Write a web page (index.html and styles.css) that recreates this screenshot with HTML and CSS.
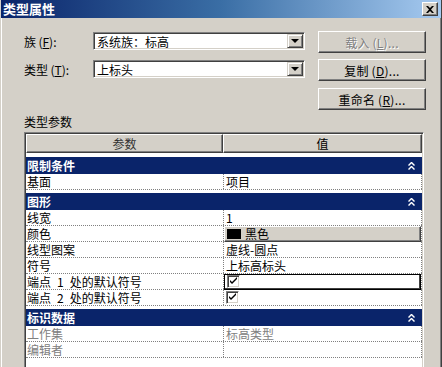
FILE: index.html
```html
<!DOCTYPE html>
<html lang="zh">
<head>
<meta charset="utf-8">
<link rel="stylesheet" href="styles.css">
</head>
<body>
<div class="window">
  <div class="titlebar">
    <span class="title">类型属性</span>
    <span class="close"><svg width="8" height="7" viewBox="0 0 8 7"><path d="M0 0h2l2 2 2-2h2L5 3.5 8 7H6L4 5 2 7H0l3-3.5z" fill="#000"/></svg></span>
  </div>
  <div class="body">
    <div class="top">
      <div class="lbl">族&thinsp;(<u>F</u>):</div>
      <div class="combo"><span class="combo-text">系统族：标高</span><span class="drop"><i></i></span></div>
      <div class="btn disabled">载入&thinsp;(<u>L</u>)...</div>
      <div class="lbl">类型&thinsp;(<u>T</u>):</div>
      <div class="combo"><span class="combo-text">上标头</span><span class="drop"><i></i></span></div>
      <div class="btn">复制&thinsp;(<u>D</u>)...</div>
      <div class="btn third">重命名&thinsp;(<u>R</u>)...</div>
    </div>
    <div class="group-label">类型参数</div>
    <div class="table">
      <div class="thead">
        <div class="th th-name">参数</div>
        <div class="th th-val">值</div>
      </div>
      <div class="gap4"></div>

      <div class="section">
        <div class="sec-head"><span>限制条件</span><svg class="chev" width="7" height="8" viewBox="0 0 7 8"><path d="M0 3 3 0h1l3 3-1 1-2.5-2.5L1 4zM0 7l3-3h1l3 3-1 1-2.5-2.5L1 8z" fill="#fff"/></svg></div>
        <div class="row"><div class="c-name">基面</div><div class="c-val">项目</div></div>
      </div>

      <div class="section">
        <div class="sec-head"><span>图形</span><svg class="chev" width="7" height="8" viewBox="0 0 7 8"><path d="M0 3 3 0h1l3 3-1 1-2.5-2.5L1 4zM0 7l3-3h1l3 3-1 1-2.5-2.5L1 8z" fill="#fff"/></svg></div>
        <div class="row"><div class="c-name">线宽</div><div class="c-val">1</div></div>
        <div class="row"><div class="c-name">颜色</div><div class="c-val"><div class="colorbtn"><span class="swatch"></span>黑色</div></div></div>
        <div class="row"><div class="c-name">线型图案</div><div class="c-val">虚线-圆点</div></div>
        <div class="row"><div class="c-name">符号</div><div class="c-val">上标高标头</div></div>
        <div class="row"><div class="c-name">端点&ensp;1&ensp;处的默认符号</div><div class="c-val"><div class="focusbox"><span class="check"><svg width="9" height="9" viewBox="0 0 9 9"><path d="M1 3v2l2 2 5-5V0L3 5z" fill="#000"/></svg></span></div></div></div>
        <div class="row"><div class="c-name">端点&ensp;2&ensp;处的默认符号</div><div class="c-val"><span class="check"><svg width="9" height="9" viewBox="0 0 9 9"><path d="M1 3v2l2 2 5-5V0L3 5z" fill="#000"/></svg></span></div></div>
      </div>

      <div class="section">
        <div class="sec-head"><span>标识数据</span><svg class="chev" width="7" height="8" viewBox="0 0 7 8"><path d="M0 3 3 0h1l3 3-1 1-2.5-2.5L1 4zM0 7l3-3h1l3 3-1 1-2.5-2.5L1 8z" fill="#fff"/></svg></div>
        <div class="row grey"><div class="c-name">工作集</div><div class="c-val">标高类型</div></div>
        <div class="row grey"><div class="c-name">编辑者</div><div class="c-val"></div></div>
      </div>
    </div>
  </div>
</div>
</body>
</html>
```

FILE: styles.css
```css
html, body {
  margin: 0;
  width: 442px;
  height: 367px;
  overflow: hidden;
  background: #d4d0c8;
  font-family: "Noto Sans CJK SC", "DejaVu Sans", sans-serif;
  font-size: 12px;
  color: #000;
}

.window {
  height: 367px;
  box-sizing: border-box;
  border-left: 1px solid #d4d0c8;
  border-right: 1px solid #404040;
  box-shadow: inset 1px 0 #fff, inset -1px 0 #808080;
  display: flex;
  flex-direction: column;
  overflow: hidden;
}

.titlebar {
  height: 18px;
  flex: none;
  display: flex;
  align-items: center;
  justify-content: space-between;
  padding: 0 3px 0 2px;
  background: linear-gradient(to right, #0a246a 0%, #3a6ea5 50%, #a6caf0 100%);
}

.title {
  color: #fff;
  font-weight: bold;
  font-size: 13px;
  line-height: 18px;
}

.close {
  width: 16px;
  height: 14px;
  box-sizing: border-box;
  background: #d4d0c8;
  border: 1px solid;
  border-color: #fff #404040 #404040 #fff;
  box-shadow: inset -1px -1px #808080;
  display: flex;
  align-items: center;
  justify-content: center;
}

.body {
  padding: 13px 0 0 23px;
  flex: 1;
  display: flex;
  flex-direction: column;
}

.top {
  display: grid;
  grid-template-columns: 69px 212px 121px;
  grid-template-rows: 22px 22px 22px;
  row-gap: 6px;
}

.lbl {
  align-self: center;
  line-height: 16px;
  white-space: nowrap;
}

.combo {
  height: 18px;
  margin-top: 1px;
  box-sizing: border-box;
  background: #fff;
  border: 1px solid;
  border-color: #808080 #fff #fff #808080;
  box-shadow: inset 1px 1px #404040, inset -1px -1px #d4d0c8;
  display: flex;
  align-items: center;
  justify-content: space-between;
  padding: 1px 1px 1px 3px;
}

.combo-text {
  line-height: 15px;
  white-space: nowrap;
}

.drop {
  width: 16px;
  height: 14px;
  box-sizing: border-box;
  background: #d4d0c8;
  border: 1px solid;
  border-color: #d4d0c8 #404040 #404040 #d4d0c8;
  box-shadow: inset 1px 1px #fff, inset -1px -1px #808080;
  display: flex;
  align-items: center;
  justify-content: center;
}

.drop i {
  display: block;
  width: 0;
  height: 0;
  border-left: 4px solid transparent;
  border-right: 4px solid transparent;
  border-top: 4px solid #000;
}

.btn {
  grid-column: 3;
  margin-left: 13px;
  box-sizing: border-box;
  height: 22px;
  background: #d4d0c8;
  border: 1px solid;
  border-color: #fff #404040 #404040 #fff;
  box-shadow: inset -1px -1px #808080, inset 1px 1px #d4d0c8;
  display: flex;
  align-items: center;
  justify-content: center;
  white-space: nowrap;
  letter-spacing: 0.3px;
}

.btn.disabled {
  color: #808080;
  text-shadow: 1px 1px 0 #fff;
}

.btn.third {
  margin-top: 1px;
}

.group-label {
  margin-top: 5px;
  line-height: 16px;
  height: 16px;
}

.table {
  margin-top: 2px;
  width: 400px;
  height: 260px;
  flex: none;
  box-sizing: border-box;
  background: #fff;
  border: 1px solid;
  border-color: #808080 #fff #fff #808080;
  box-shadow: inset 1px 1px #404040, inset -1px -1px #d4d0c8;
  padding: 1px;
}

.thead {
  display: flex;
  height: 19px;
}

.th {
  box-sizing: border-box;
  height: 19px;
  background: #d4d0c8;
  border: 1px solid;
  border-color: #fff #404040 #404040 #fff;
  box-shadow: inset -1px -1px #808080;
  display: flex;
  align-items: center;
  justify-content: center;
  line-height: 16px;
}

.th-name {
  width: 197px;
  color: #333;
}

.th-val {
  flex: 1;
}

.gap4 {
  height: 4px;
}

.section {
  margin-bottom: 3px;
}

.sec-head {
  height: 17px;
  background: #0a246a;
  color: #fff;
  font-weight: bold;
  display: flex;
  align-items: center;
  justify-content: space-between;
  padding: 0 7px 0 1px;
  line-height: 16px;
}

.chev {
  display: block;
}

.row {
  display: flex;
  height: 16px;
  box-sizing: border-box;
  border-bottom: 1px dotted #808080;
  line-height: 15px;
}

.c-name {
  width: 198px;
  box-sizing: border-box;
  border-right: 1px dotted #808080;
  padding-left: 1px;
  white-space: nowrap;
}

.c-val {
  flex: 1;
  box-sizing: border-box;
  border-right: 1px dotted #808080;
  padding-left: 2px;
  display: flex;
  align-items: center;
  white-space: nowrap;
}

.row.grey {
  color: #808080;
}

.colorbtn {
  margin-left: -2px;
  width: 197px;
  height: 16px;
  box-sizing: border-box;
  background: #d4d0c8;
  border: 1px solid;
  border-color: #fff #404040 #404040 #fff;
  box-shadow: inset -1px -1px #808080;
  display: flex;
  align-items: center;
  padding-left: 2px;
  line-height: 14px;
}

.swatch {
  width: 14px;
  height: 10px;
  background: #000;
  margin-right: 4px;
}

.focusbox {
  margin-left: -2px;
  width: 197px;
  height: 16px;
  box-sizing: border-box;
  border: 1px solid #000;
  box-shadow: inset -1px -1px #404040;
  display: flex;
  align-items: center;
  padding-left: 2px;
}

.check {
  width: 13px;
  height: 13px;
  box-sizing: border-box;
  background: #fff;
  border: 1px solid;
  border-color: #808080 #fff #fff #808080;
  box-shadow: inset 1px 1px #404040, inset -1px -1px #d4d0c8;
  display: flex;
  align-items: center;
  justify-content: center;
}

.check svg {
  display: block;
}
```
